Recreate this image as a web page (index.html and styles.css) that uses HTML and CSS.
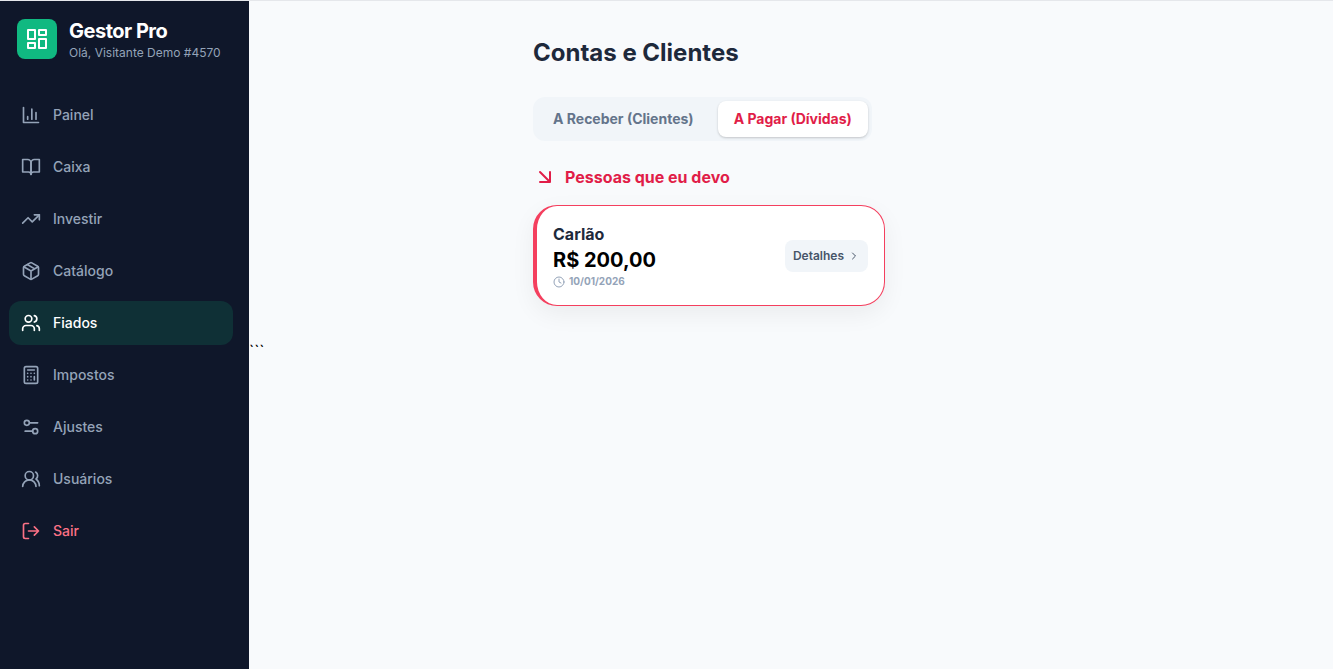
FILE: index.html
```html
<!DOCTYPE html>
<html lang="pt-BR">
<head>
<meta charset="utf-8">
<meta name="viewport" content="width=device-width, initial-scale=1">
<title>Gestor Pro</title>
<link rel="stylesheet" href="styles.css">
</head>
<body>
<div class="app">
  <aside class="sidebar">
    <header class="brand">
      <span class="brand-logo">
        <svg class="icon icon-lg" viewBox="0 0 24 24" aria-hidden="true"><rect x="3" y="3" width="7" height="9"/><rect x="14" y="3" width="7" height="5"/><rect x="14" y="12" width="7" height="9"/><rect x="3" y="16" width="7" height="5"/></svg>
      </span>
      <div>
        <p class="brand-name">Gestor Pro</p>
        <p class="brand-user">Olá, Visitante Demo #4570</p>
      </div>
    </header>
    <nav class="nav">
      <button class="nav-item" type="button">
        <svg class="icon" viewBox="0 0 24 24" aria-hidden="true"><path d="M3 3v18h18M18 17V9M13 17V5M8 17v-3"/></svg>
        Painel
      </button>
      <button class="nav-item" type="button">
        <svg class="icon" viewBox="0 0 24 24" aria-hidden="true"><path d="M2 3h6a4 4 0 0 1 4 4v14a3 3 0 0 0-3-3H2z"/><path d="M22 3h-6a4 4 0 0 0-4 4v14a3 3 0 0 1 3-3h7z"/></svg>
        Caixa
      </button>
      <button class="nav-item" type="button">
        <svg class="icon" viewBox="0 0 24 24" aria-hidden="true"><path d="M22 7l-8.5 8.5-5-5L2 17"/><path d="M16 7h6v6"/></svg>
        Investir
      </button>
      <button class="nav-item" type="button">
        <svg class="icon" viewBox="0 0 24 24" aria-hidden="true"><path d="M11 21.73a2 2 0 0 0 2 0l7-4A2 2 0 0 0 21 16V8a2 2 0 0 0-1-1.73l-7-4a2 2 0 0 0-2 0l-7 4A2 2 0 0 0 3 8v8a2 2 0 0 0 1 1.73z"/><path d="M12 22V12M3.3 7L12 12l8.7-5M7.5 4.27l9 5.15"/></svg>
        Catálogo
      </button>
      <button class="nav-item is-active" type="button" aria-current="page">
        <svg class="icon" viewBox="0 0 24 24" aria-hidden="true"><path d="M16 21v-2a4 4 0 0 0-4-4H6a4 4 0 0 0-4 4v2"/><circle cx="9" cy="7" r="4"/><path d="M22 21v-2a4 4 0 0 0-3-3.87M16 3.13a4 4 0 0 1 0 7.75"/></svg>
        Fiados
      </button>
      <button class="nav-item" type="button">
        <svg class="icon" viewBox="0 0 24 24" aria-hidden="true"><rect x="4" y="2" width="16" height="20" rx="2"/><path d="M8 6h8M16 14v4M16 10h.01M12 10h.01M8 10h.01M12 14h.01M8 14h.01M12 18h.01M8 18h.01"/></svg>
        Impostos
      </button>
      <button class="nav-item" type="button">
        <svg class="icon" viewBox="0 0 24 24" aria-hidden="true"><path d="M20 7h-9M14 17H5"/><circle cx="17" cy="17" r="3"/><circle cx="7" cy="7" r="3"/></svg>
        Ajustes
      </button>
      <button class="nav-item" type="button">
        <svg class="icon" viewBox="0 0 24 24" aria-hidden="true"><path d="M18 21a8 8 0 0 0-16 0"/><circle cx="10" cy="8" r="5"/><path d="M22 20c0-3.37-2-6.5-4-8a5 5 0 0 0-.45-8.3"/></svg>
        Usuários
      </button>
      <button class="nav-item is-exit" type="button">
        <svg class="icon" viewBox="0 0 24 24" aria-hidden="true"><path d="M9 21H5a2 2 0 0 1-2-2V5a2 2 0 0 1 2-2h4M16 17l5-5-5-5M21 12H9"/></svg>
        Sair
      </button>
    </nav>
  </aside>
  <span class="stray">```</span>
  <main class="main">
    <div class="content">
      <h1 class="title">Contas e Clientes</h1>
      <div class="tabs">
        <button class="tab" type="button">A Receber (Clientes)</button>
        <button class="tab is-selected" type="button">A Pagar (Dívidas)</button>
      </div>
      <h2 class="subtitle">
        <svg class="icon icon-lg" viewBox="0 0 24 24" aria-hidden="true"><path d="M7 7l10 10M17 7v10H7"/></svg>
        Pessoas que eu devo
      </h2>
      <article class="card">
        <div>
          <h3 class="card-name">Carlão</h3>
          <p class="card-amount">R$ 200,00</p>
          <p class="card-date">
            <svg class="icon icon-xs" viewBox="0 0 24 24" aria-hidden="true"><circle cx="12" cy="12" r="10"/><path d="M12 6v6l4 2"/></svg>
            10/01/2026
          </p>
        </div>
        <button class="details" type="button">
          Detalhes
          <svg class="icon icon-xs" viewBox="0 0 24 24" aria-hidden="true"><path d="M9 18l6-6-6-6"/></svg>
        </button>
      </article>
    </div>
  </main>
</div>
</body>
</html>
```
FILE: styles.css
```css
* {
  box-sizing: border-box;
}

body,
h1,
h2,
h3,
p {
  margin: 0;
}

body {
  font-family: Inter, "Liberation Sans", sans-serif;
  background: #f8fafc;
  color: #000;
}

button {
  border: 0;
  font: inherit;
  cursor: pointer;
}

.app {
  display: flex;
  min-height: 100vh;
  border-top: 1px solid #e5e7eb;
}

.icon {
  flex: none;
  width: 20px;
  height: 20px;
  fill: none;
  stroke: currentColor;
  stroke-width: 2;
  stroke-linecap: round;
  stroke-linejoin: round;
}

.icon-lg {
  width: 24px;
  height: 24px;
}

.icon-xs {
  width: 12px;
  height: 12px;
}

.sidebar {
  flex: none;
  width: 249px;
  padding: 16px 16px 16px 9px;
  background: #0f172a;
}

.brand {
  display: flex;
  align-items: center;
  gap: 12px;
  padding: 0 8px;
  margin-bottom: 32px;
}

.brand-logo {
  display: grid;
  place-items: center;
  width: 40px;
  height: 40px;
  border-radius: 8px;
  background: #10b981;
  color: #fff;
}

.brand-name {
  font-size: 20px;
  line-height: 28px;
  font-weight: 700;
  letter-spacing: -0.025em;
  color: #fff;
}

.brand-user {
  font-size: 12px;
  line-height: 16px;
  color: #94a3b8;
}

.nav {
  display: grid;
  gap: 8px;
}

.nav-item {
  display: flex;
  align-items: center;
  gap: 12px;
  height: 44px;
  padding: 0 12px;
  border-radius: 12px;
  background: transparent;
  color: #94a3b8;
  font-size: 14px;
  line-height: 20px;
  font-weight: 500;
  text-align: left;
}

.nav-item.is-active {
  background: #0f3036;
  color: #fff;
}

.nav-item.is-exit {
  color: #fb7185;
}

.stray {
  align-self: center;
  width: 0;
  margin-top: 32px;
  font-size: 16px;
  line-height: 24px;
}

.main {
  flex: 1;
  padding: 32px;
}

.content {
  max-width: 516px;
  margin: 0 auto;
}

.title {
  margin-bottom: 24px;
  font-size: 24px;
  line-height: 40px;
  font-weight: 700;
  color: #1e293b;
}

.tabs {
  display: inline-flex;
  gap: 8px;
  padding: 4px;
  margin-bottom: 24px;
  border-radius: 12px;
  background: #f1f5f9;
}

.tab {
  padding: 8px 16px;
  border-radius: 8px;
  background: transparent;
  color: #64748b;
  font-size: 14px;
  line-height: 20px;
  font-weight: 700;
  white-space: nowrap;
}

.tab.is-selected {
  background: #fff;
  color: #e11d48;
  box-shadow: 0 1px 3px rgba(0, 0, 0, 0.1), 0 1px 2px rgba(0, 0, 0, 0.1);
}

.subtitle {
  display: flex;
  align-items: center;
  gap: 8px;
  margin-bottom: 16px;
  font-size: 16px;
  line-height: 24px;
  font-weight: 700;
  color: #e11d48;
}

.card {
  display: flex;
  align-items: center;
  justify-content: space-between;
  max-width: 352px;
  padding: 16px;
  border: 1px solid #f43f5e;
  border-left-width: 4px;
  border-radius: 24px;
  background: #fff;
  box-shadow: 0 8px 24px rgba(0, 0, 0, 0.06);
}

.card-name {
  font-size: 16px;
  line-height: 24px;
  font-weight: 700;
  color: #1e293b;
}

.card-amount {
  font-size: 20px;
  line-height: 28px;
  font-weight: 700;
}

.card-date {
  display: flex;
  align-items: center;
  gap: 4px;
  font-size: 10px;
  line-height: 15px;
  font-weight: 700;
  color: #94a3b8;
}

.details {
  display: flex;
  align-items: center;
  gap: 4px;
  padding: 8px;
  border-radius: 8px;
  background: #f1f5f9;
  color: #475569;
  font-size: 12px;
  line-height: 16px;
  font-weight: 600;
}
```
